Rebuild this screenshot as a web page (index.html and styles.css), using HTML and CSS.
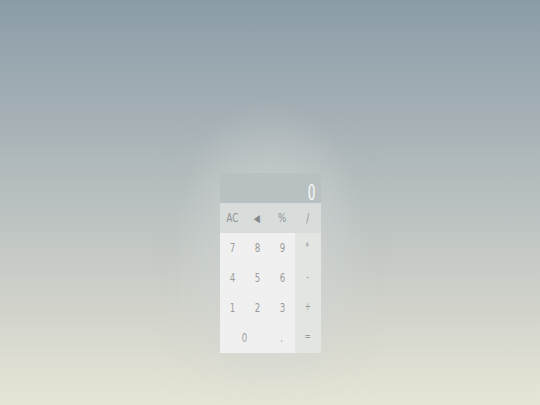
FILE: index.html
```html
<!DOCTYPE html>
<html lang="en">
<head>
  <meta charset="UTF-8">
  <title>Calculator</title>
  <link rel="stylesheet" href="styles.css">
</head>
<body>

  <div class="calc">
    <div class="display"><span>0</span></div>
    <div class="key fn"><span>AC</span></div>
    <div class="key fn back"><span>&#9664;</span></div>
    <div class="key fn"><span>%</span></div>
    <div class="key fn"><span>/</span></div>

    <div class="key num"><span>7</span></div>
    <div class="key num"><span>8</span></div>
    <div class="key num"><span>9</span></div>
    <div class="key op"><span>*</span></div>

    <div class="key num"><span>4</span></div>
    <div class="key num"><span>5</span></div>
    <div class="key num"><span>6</span></div>
    <div class="key op"><span>-</span></div>

    <div class="key num"><span>1</span></div>
    <div class="key num"><span>2</span></div>
    <div class="key num"><span>3</span></div>
    <div class="key op"><span>+</span></div>

    <div class="key num zero"><span>0</span></div>
    <div class="key num"><span>.</span></div>
    <div class="key op"><span>=</span></div>
  </div>

</body>
</html>
```

FILE: styles.css
```css
body {
  margin: 0;
  height: 405px;
  overflow: hidden;
  display: flex;
  justify-content: center;
  align-items: flex-start;
  background:
    radial-gradient(ellipse 95px 150px at 270px 250px, rgba(214, 219, 217, 0.65), rgba(214, 219, 217, 0) 100%),
    linear-gradient(to bottom, #8b9ca8 0%, #b9c0c0 50%, #e7e5d6 100%);
  font-family: "DejaVu Sans", sans-serif;
  font-stretch: condensed;
}

.calc {
  margin-top: 173px;
  width: 101px;
  display: grid;
  grid-template-columns: 25px 25px 25px 26px;
  grid-template-rows: 30px repeat(5, 30px);
  box-shadow: 0 0 50px 15px rgba(205, 210, 208, 0.3);
}

.display {
  grid-column: 1 / 5;
  background: #b8c0c1;
  color: #f4f6f6;
  font-family: "Open Sans", sans-serif;
  font-weight: 400;
  font-size: 22px;
  text-align: right;
  line-height: 36px;
  padding-right: 5px;
}

.display span {
  display: inline-block;
  transform: scaleX(0.82);
  transform-origin: right center;
}

.key {
  display: flex;
  align-items: center;
  justify-content: center;
  color: #9a9c9c;
  font-size: 12px;
}

.key span {
  display: inline-block;
  transform: scaleX(0.8);
}

.fn {
  background: #d8dcdb;
  color: #8f9393;
}

.back {
  font-size: 11px;
  color: #858989;
}

.num {
  background: #f0f0f0;
}

.zero {
  grid-column: span 2;
}

.op {
  background: #e3e5e3;
  font-size: 10px;
  padding-bottom: 4px;
}
```
